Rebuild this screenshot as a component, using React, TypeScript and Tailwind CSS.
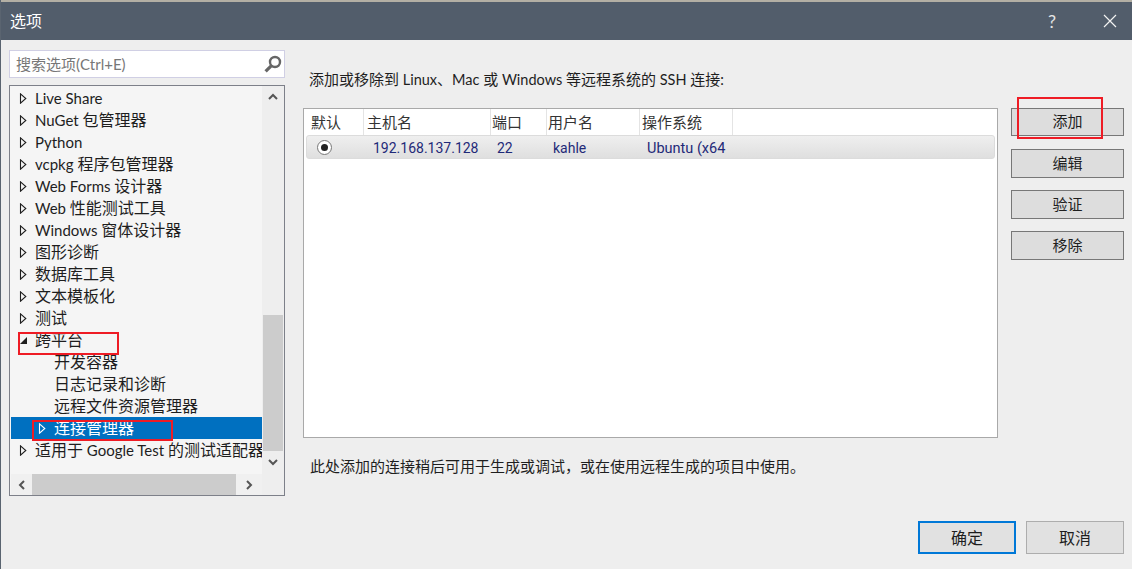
import React from "react";

const font = { fontFamily: 'Lato, "Noto Sans CJK SC", sans-serif' };

function Mixed({ text, latin }: { text: string; latin: string }) {
  const parts = text.split(/([\x20-\x7e]+)/).filter(Boolean);
  return (
    <>
      {parts.map((p, i) =>
        /^[\x20-\x7e]+$/.test(p) ? (
          <span key={i} className={`whitespace-pre ${latin}`}>
            {p}
          </span>
        ) : (
          <span key={i}>{p}</span>
        ),
      )}
    </>
  );
}

function Arrow({ color = "#1e1e1e" }: { color?: string }) {
  return (
    <svg width="9" height="11" viewBox="0 0 9 11" className="shrink-0">
      <path d="M1.5 0.8 L6.8 5.5 L1.5 10.2 Z" fill="none" stroke={color} strokeWidth="1.1" />
    </svg>
  );
}

function Row({ label }: { label: string }) {
  return (
    <div className="flex h-[22px] items-center whitespace-nowrap pl-[8px] text-[#1e1e1e]">
      <Arrow />
      <span className="ml-[7px]">
        <Mixed text={label} latin="text-[15px]" />
      </span>
    </div>
  );
}

function Child({ label }: { label: string }) {
  return <div className="flex h-[22px] items-center whitespace-nowrap pl-[43px] text-[#1e1e1e]">{label}</div>;
}

function Chevron({ d }: { d: string }) {
  return (
    <svg width="12" height="12" viewBox="0 0 12 12">
      <path d={d} fill="none" stroke="#555" strokeWidth="2" />
    </svg>
  );
}

function SideButton({ label, className }: { label: string; className: string }) {
  return (
    <button className={`flex w-[113px] items-center justify-center border border-[#777] bg-[#dddddd] pb-[1px] text-[15px] text-[#1e1e1e] ${className}`}>
      {label}
    </button>
  );
}

const top = ["Live Share", "NuGet 包管理器", "Python", "vcpkg 程序包管理器", "Web Forms 设计器", "Web 性能测试工具", "Windows 窗体设计器", "图形诊断", "数据库工具", "文本模板化", "测试"];

export default function App() {
  return (
    <div style={font} className="relative flex h-[569px] w-[1132px] flex-col overflow-hidden border-l border-[#5a6470] bg-[#eeeeee] text-[15px]">
      <div className="h-[2px] bg-[#b3afa4]" />
      <div className="flex h-[38px] items-center justify-between bg-[#525d6b] pl-[9px] pr-[15px] text-[#fff]">
        <span className="text-[16px]">选项</span>
        <div className="flex items-center gap-[47px]">
          <span className="text-[18px] text-[#e5e5e5]">?</span>
          <svg width="14" height="14" viewBox="0 0 14 14">
            <path d="M1 1 L13 13 M13 1 L1 13" stroke="#f2f2f2" strokeWidth="1.2" />
          </svg>
        </div>
      </div>

      <div className="flex min-h-0 flex-1">
        <div className="ml-[8px] mt-[10px] flex w-[276px] shrink-0 flex-col gap-[7px]">
          <div className="flex h-[28px] items-center justify-between border border-[#d0cfe4] bg-white pl-[6px] pr-[2px] text-[#777]">
            <span>搜索选项(Ctrl+E)</span>
            <svg width="19" height="19" viewBox="0 0 19 19">
              <circle cx="12" cy="7" r="5" fill="none" stroke="#666" strokeWidth="2.4" />
              <path d="M8.2 10.8 L2.6 16.4" stroke="#666" strokeWidth="3.2" />
            </svg>
          </div>
          <div className="relative flex h-[411px] border border-[#7d8089] bg-[#f5f5f5] pl-[1px] text-[16px]">
            <div className="flex min-w-0 flex-1 flex-col">
              <div className="min-h-0 flex-1 overflow-hidden pt-[1px]">
                {top.map((t) => (
                  <Row key={t} label={t} />
                ))}
                <div className="flex h-[22px] items-center pl-[8px] text-[#1e1e1e]">
                  <svg width="9" height="9" viewBox="0 0 9 9" className="shrink-0">
                    <path d="M8 1 V8 H1 Z" fill="#1e1e1e" />
                  </svg>
                  <span className="ml-[7px]">跨平台</span>
                </div>
                <Child label="开发容器" />
                <Child label="日志记录和诊断" />
                <Child label="远程文件资源管理器" />
                <div className="flex h-[22px] items-center whitespace-nowrap bg-[#0070c0] pl-[27px] text-white">
                  <Arrow color="#fff" />
                  <span className="ml-[7px]">连接管理器</span>
                </div>
                <Row label="适用于 Google Test 的测试适配器" />
              </div>
              <div className="flex h-[21px] shrink-0 items-center bg-[#f0f0f0]">
                <div className="flex w-[21px] justify-center">
                  <Chevron d="M8 2 L4 6 L8 10" />
                </div>
                <div className="h-full w-[204px] bg-[#cccccc]" />
                <div className="flex flex-1 justify-center">
                  <Chevron d="M4 2 L8 6 L4 10" />
                </div>
              </div>
            </div>
            <div className="flex w-[22px] shrink-0 flex-col items-center bg-[#eeeeee]">
              <div className="flex h-[22px] items-center justify-center">
                <Chevron d="M2 8 L6 4 L10 8" />
              </div>
              <div className="mt-[207px] h-[136px] w-[20px] bg-[#cccccc]" />
              <div className="flex h-[22px] items-center justify-center">
                <Chevron d="M2 4 L6 8 L10 4" />
              </div>
            </div>
          </div>
        </div>

        <div className="ml-[18px] flex w-[695px] shrink-0 flex-col">
          <div className="mt-[29px] h-[20px] whitespace-nowrap pl-[6px] leading-[20px] text-[#1e1e1e]">
            <Mixed text="添加或移除到 Linux、Mac 或 Windows 等远程系统的 SSH 连接:" latin="text-[14.5px]" />
          </div>
          <div className="mt-[19px] h-[330px] border border-[#a9a9a9] bg-white">
            <div className="flex h-[26px] items-center text-[#333] [&>div]:h-full [&>div]:border-r [&>div]:border-[#e4e4e4] [&>div]:leading-[26px]">
              <div className="w-[60px] pl-[7px]">默认</div>
              <div className="w-[127px] pl-[3px]">主机名</div>
              <div className="w-[56px] pl-[1px]">端口</div>
              <div className="w-[93px] pl-[1px]">用户名</div>
              <div className="w-[93px] pl-[2px]">操作系统</div>
            </div>
            <div style={{ fontFamily: "Roboto, sans-serif" }} className="mx-[2px] flex h-[24px] items-center rounded-[3px] border border-[#dcdcdc] bg-gradient-to-b from-[#efefef] to-[#dfdfdf] text-[14px] text-[#1f2a78]">
              <div className="flex w-[35px] justify-center">
                <span className="flex h-[15px] w-[15px] items-center justify-center rounded-full border border-[#777] bg-white">
                  <span className="h-[7px] w-[7px] rounded-full bg-[#222]" />
                </span>
              </div>
              <div className="w-[155px] pl-[31px] pt-[3px]">192.168.137.128</div>
              <div className="w-[56px] pt-[3px]">22</div>
              <div className="w-[94px] pt-[3px]">kahle</div>
              <div className="w-[84px] overflow-hidden whitespace-nowrap pt-[3px] text-[14.5px]">Ubuntu (x64</div>
            </div>
          </div>
          <div className="mt-[17px] pl-[7px] text-[#1e1e1e]">此处添加的连接稍后可用于生成或调试，或在使用远程生成的项目中使用。</div>
        </div>

        <div className="ml-[13px] mt-[68px] flex flex-col gap-[12px]">
          <SideButton label="添加" className="mb-[1px] h-[28px]" />
          <SideButton label="编辑" className="h-[29px]" />
          <SideButton label="验证" className="h-[29px]" />
          <SideButton label="移除" className="h-[29px]" />
        </div>
      </div>

      <div className="absolute left-[917px] top-[521px] flex gap-[10px]">
        <button className="h-[33px] w-[98px] border-2 border-[#0078d7] bg-[#e1e1e1] text-[16px] text-[#1e1e1e]">确定</button>
        <button className="h-[33px] w-[98px] border border-[#adadad] bg-[#e1e1e1] text-[16px] text-[#1e1e1e]">取消</button>
      </div>

      <div className="absolute left-[17px] top-[332px] h-[23px] w-[101px] border-2 border-[#ee1c25]" />
      <div className="absolute left-[31px] top-[420px] h-[21px] w-[141px] border-2 border-[#ee1c25]" />
      <div className="absolute left-[1016px] top-[97px] h-[42px] w-[86px] border-2 border-[#ee1c25]" />
    </div>
  );
}
